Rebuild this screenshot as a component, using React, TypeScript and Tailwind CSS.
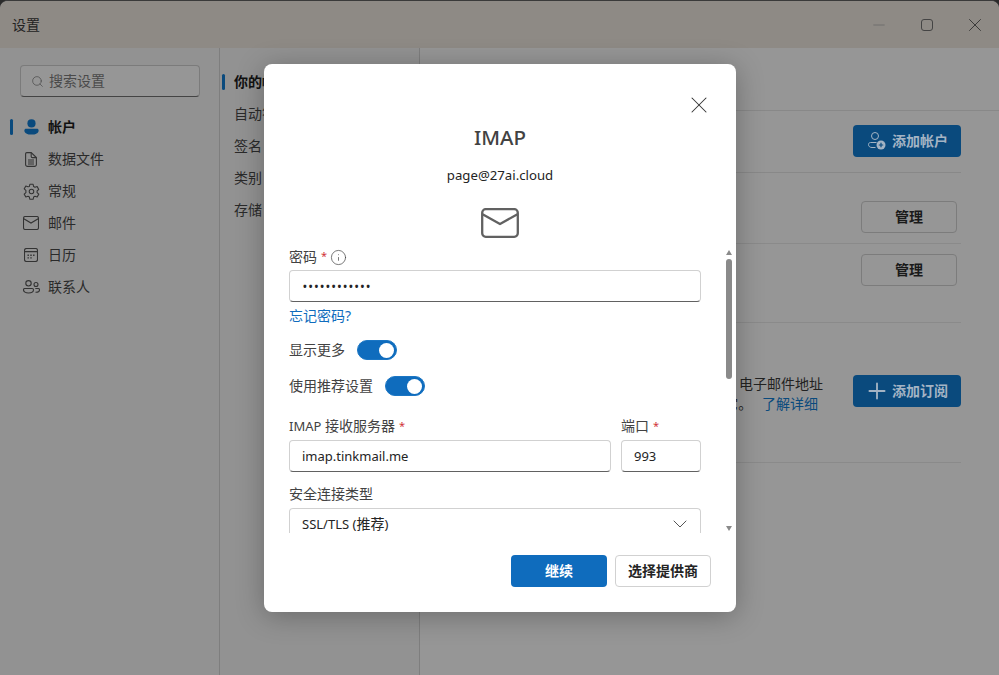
import React from "react";
import { Search, Minus, X, ChevronDown, Info, Plus } from "lucide-react";

const font = "font-['Noto_Sans','Noto_Sans_CJK_SC',sans-serif]";

function UserFilled() {
  return (
    <svg width="15" height="16" viewBox="0 0 16 18" fill="#0a4a7d">
      <circle cx="8" cy="5" r="4.600" />
      <path d="M1.800 11h12.400c1 0 1.800.8 1.800 1.800 0 2.900-3.200 4.700-8 4.700s-8-1.800-8-4.700C0 11.800.8 11 1.800 11z" />
    </svg>
  );
}
function FileIcon() {
  return (
    <svg width="12" height="15" viewBox="0 0 12 15" fill="none" stroke="#333" strokeWidth="1.100">
      <path d="M1.800.6h4.400L11.400 5.600v6.900a1.900 1.900 0 0 1-1.900 1.900h-7A1.900 1.900 0 0 1 .6 12.500V1.800A1.200 1.200 0 0 1 1.800.6z" />
      <path d="M6.200.8v3.600c0 .7.500 1.200 1.200 1.200h3.800M3 8h6M3 10h6M3 12h6" />
    </svg>
  );
}
function MailIcon() {
  return (
    <svg width="16" height="14" viewBox="0 0 16 14" fill="none" stroke="#333" strokeWidth="1.100">
      <rect x="0.500" y="0.500" width="15" height="13" rx="1.800" />
      <path d="M0.800 2.800 8 7l7.200-4.200" />
    </svg>
  );
}
function BigMail() {
  return (
    <svg width="38" height="30" viewBox="0 0 38 30" fill="none" stroke="#616161" strokeWidth="2.300" strokeLinecap="round" strokeLinejoin="round">
      <rect x="1.200" y="1.200" width="35.600" height="27.600" rx="3.500" />
      <path d="M2 6.500 19 16 36 6.500" />
    </svg>
  );
}
function CalendarIcon() {
  return (
    <svg width="14" height="14" viewBox="0 0 14 14" fill="none" stroke="#333" strokeWidth="1.100">
      <rect x="0.500" y="0.500" width="13" height="13" rx="2" />
      <path d="M.5 3.600h13" />
      <path fill="#333" stroke="none" d="M3.500 6.500h1.400v1.400H3.500zM6.300 6.500h1.400v1.400H6.300zM9.100 6.500h1.400v1.400H9.100zM3.500 9.200h1.400v1.400H3.500zM6.300 9.200h1.400v1.400H6.300z" />
    </svg>
  );
}
function GearIcon() {
  return (
    <svg width="17" height="17" viewBox="0 0 24 24" fill="none" stroke="#333" strokeWidth="1.500" strokeLinejoin="round">
      <path d="M9.700 1.800h4.600l.7 3.200 1.900 1.100 3.100-1 2.300 4-2.400 2.200v2.200l2.400 2.200-2.300 4-3.100-1-1.900 1.100-.7 3.200H9.700L9 19.800l-1.900-1.100-3.100 1-2.300-4L4.100 13.500v-3L1.700 8.300l2.300-4 3.100 1L9 4.900z" />
      <circle cx="12" cy="12" r="3.200" />
    </svg>
  );
}
function PeopleIcon() {
  return (
    <svg width="17" height="14" viewBox="0 0 17 14" fill="none" stroke="#333" strokeWidth="1.100">
      <circle cx="5.500" cy="3.300" r="2.700" />
      <path d="M1.800 8.500h7.400c.8 0 1.300.6 1.300 1.300 0 2-2.100 3.200-5 3.200s-5-1.200-5-3.200c0-.7.500-1.300 1.300-1.300z" />
      <circle cx="13" cy="4.500" r="2" />
      <path d="M12.300 8.500h2.900c.8 0 1.300.6 1.300 1.300 0 1.500-1.500 2.400-3.400 2.400h-.6" />
    </svg>
  );
}
function UserAddIcon() {
  return (
    <svg width="18" height="18" viewBox="0 0 18 18" fill="none" stroke="#a4b4c4" strokeWidth="1">
      <circle cx="7" cy="4" r="3.500" />
      <path d="M7.500 15.500H4c-1.900 0-3.500-1-3.500-3 0-1.200.9-2 2-2h6" />
      <circle cx="13" cy="13" r="4.500" fill="#a4b4c4" stroke="none" />
      <path d="M13 10.800v4.400M10.800 13h4.400" stroke="#0a4a7d" strokeWidth="1.200" />
    </svg>
  );
}

const navItems = [
  { label: "帐户", icon: <UserFilled />, active: true },
  { label: "数据文件", icon: <FileIcon /> },
  { label: "常规", icon: <GearIcon /> },
  { label: "邮件", icon: <MailIcon /> },
  { label: "日历", icon: <CalendarIcon /> },
  { label: "联系人", icon: <PeopleIcon /> },
];

const subItems = ["你的帐户", "自动答复", "签名", "类别", "存储"];

function Toggle() {
  return (
    <span className="flex h-5 w-10 items-center justify-end rounded-full border border-[#1b76c4] bg-[#0f6cbd] pr-[2px]">
      <span className="h-[15px] w-[15px] rounded-full bg-white" />
    </span>
  );
}

function Req() {
  return <span className="relative -top-[1px] ml-1 text-[11px] text-[#d13438]">*</span>;
}

function Field({ value }: { value: string }) {
  return (
    <div className="flex h-8 items-center rounded border border-[#d1d1d1] border-b-[#616161] bg-white px-3 text-[13px] text-[#242424]">
      {value}
    </div>
  );
}

export default function App() {
  return (
    <div className={`relative h-[675px] w-[999px] overflow-hidden bg-[#2b2b2b] ${font}`}>
      <div className="flex h-full flex-col overflow-hidden rounded-t-lg border-t border-[#3a3a3a] bg-[#969696]">
        <header className="flex h-[47px] shrink-0 items-center justify-between bg-[#8e8a85] pl-3 text-sm text-[#222]">
          <span>设置</span>
          <div className="flex items-center">
            <span className="flex w-12 justify-center"><Minus size={18} strokeWidth={1} color="#666" /></span>
            <span className="flex w-12 justify-center"><span className="h-3 w-3 rounded-[3px] border border-[#444]" /></span>
            <span className="flex w-12 justify-center"><X size={22} strokeWidth={1} color="#333" /></span>
          </div>
        </header>
        <div className="flex min-h-0 flex-1">
          <aside className="w-[220px] shrink-0 border-r border-[#7e7e7e] bg-[#929292] pr-[19px] pl-5 pt-[17px]">
            <div className="flex h-8 items-center gap-[5px] rounded border border-[#7b7b7b] border-b-[#444] bg-[#969696] px-[10px] text-sm text-[#4a4a4a]">
              <Search size={13} strokeWidth={1.2} color="#444" />
              <span>搜索设置</span>
            </div>
            <nav className="mt-[14px] -ml-2.5 flex flex-col">
              {navItems.map((item) => (
                <div key={item.label} className="flex h-8 items-center text-sm text-[#2a2a2a]">
                  <span className={`h-4 w-[3px] rounded-sm ${item.active ? "bg-[#0a4a7d]" : ""}`} />
                  <span className="ml-[8px] flex w-5 justify-center">{item.icon}</span>
                  <span className={`ml-[7px] ${item.active ? "font-bold text-[#111]" : ""}`}>{item.label}</span>
                </div>
              ))}
            </nav>
          </aside>
          <section className="w-[200px] shrink-0 border-r border-[#7e7e7e] bg-[#929292] pt-[18px] pl-0.5">
            {subItems.map((s, i) => (
              <div key={s} className="flex h-8 items-center text-sm text-[#2a2a2a]">
                <span className={`h-4 w-[3px] rounded-sm ${i === 0 ? "bg-[#0a4a7d]" : ""}`} />
                <span className={`ml-[9px] ${i === 0 ? "font-bold text-[#111]" : ""}`}>{s}</span>
              </div>
            ))}
          </section>
          <main className="flex-1 pt-[62px] text-sm text-[#222]">
            <div className="border-t border-[#888]">
              <div className="mr-[38px] flex h-[62px] justify-end border-b border-[#888] pt-[14px]">
                <button className="flex h-8 w-[108px] items-center gap-[6px] rounded bg-[#0a4a7d] pl-[15px] text-sm font-bold text-[#a4b4c4]">
                  <UserAddIcon />添加帐户
                </button>
              </div>
              <div className="mr-[38px] flex h-[71px] justify-end border-b border-[#8a8a8a] pt-[28px] pr-1">
                <button className="h-8 w-24 rounded border border-[#7c7c7c] text-sm font-bold text-[#1a1a1a]">管理</button>
              </div>
              <div className="mr-[38px] flex h-[79px] justify-end border-b border-[#8a8a8a] pt-[10px] pr-1">
                <button className="h-8 w-24 rounded border border-[#7c7c7c] text-sm font-bold text-[#1a1a1a]">管理</button>
              </div>
              <div className="mr-[38px] flex h-[140px] items-start justify-end border-b border-[#8a8a8a] pt-[52px]">
                <div className="mr-[30px] mt-[-1px] text-right leading-5 whitespace-nowrap">
                  <div>电子邮件地址</div>
                  <div className="pr-[5px]">它。 <span className="ml-1.5 text-[#0a4a7d]">了解详细</span></div>
                </div>
                <button className="flex h-8 w-[108px] shrink-0 items-center gap-[2px] rounded bg-[#0a4a7d] pl-[11px] text-sm font-bold text-[#a4b4c4]">
                  <Plus size={26} strokeWidth={1.7} color="#a4b4c4" />添加订阅
                </button>
              </div>
            </div>
          </main>
        </div>
      </div>

      <div className="absolute left-[264px] top-[64px] flex h-[548px] w-[472px] flex-col rounded-lg bg-white shadow-[0_4px_28px_rgba(0,0,0,0.28)]">
        <div className="flex justify-end pr-[23px] pt-[27px]">
          <X size={28} strokeWidth={0.9} color="#333" />
        </div>
        <h1 className="mt-1 text-center text-[20.5px] leading-7 font-medium text-[#424242]">IMAP</h1>
        <p className="mt-[14px] text-center text-[13.2px] leading-5 text-[#242424]">page@27ai.cloud</p>
        <div className="mt-[23px] flex justify-center">
          <BigMail />
        </div>
        <div className="mt-[9px] flex h-[286px] overflow-hidden">
          <div className="ml-[25px] w-[412px] shrink-0 text-sm text-[#424242]">
            <div className="flex h-5 items-center">
              <span>密码</span><Req />
              <Info size={17} strokeWidth={1} color="#424242" className="ml-[3px]" />
            </div>
            <div className="mt-[3px] flex h-8 items-center rounded border border-[#d1d1d1] border-b-[#616161] bg-white px-3 text-[#242424]">
              <span className="ml-px text-[10px] font-bold tracking-[2px]">••••••••••••</span>
            </div>
            <div className="mt-[4px] h-5 leading-5 text-[#0f6cbd]">忘记密码?</div>
            <div className="mt-[14px] flex items-center gap-3"><span>显示更多</span><Toggle /></div>
            <div className="mt-4 flex items-center gap-3"><span>使用推荐设置</span><Toggle /></div>
            <div className="mt-[20px] flex gap-2.5">
              <div className="flex-1">
                <div className="mb-1 h-5 leading-5"><span className="text-[13px]">IMAP</span> 接收服务器<Req /></div>
                <Field value="imap.tinkmail.me" />
              </div>
              <div className="w-20">
                <div className="mb-1 h-5 leading-5">端口<Req /></div>
                <Field value="993" />
              </div>
            </div>
            <div className="mt-[12px] h-5 leading-5">安全连接类型</div>
            <div className="mt-1 flex h-8 items-center justify-between rounded border border-[#d1d1d1] border-b-[#616161] bg-white px-3 text-[#242424]">
              <span><span className="text-[13px]">SSL/TLS (</span>推荐<span className="text-[13px]">)</span></span>
              <ChevronDown size={24} strokeWidth={0.9} color="#424242" className="-mr-1" />
            </div>
          </div>
          <div className="ml-[25px] flex h-[286px] w-[6px] flex-col items-center justify-between pt-[3px] pb-[2px]">
            <span className="h-0 w-0 border-x-[3px] border-b-[5px] border-x-transparent border-b-[#8a8a8a]" />
            <span className="mt-1 mb-auto h-[120px] w-[6px] rounded bg-[#8a8a8a]" />
            <span className="h-0 w-0 border-x-[3px] border-t-[5px] border-x-transparent border-t-[#8a8a8a]" />
          </div>
        </div>
        <div className="mt-[22px] flex justify-end gap-2 pr-[25px]">
          <button className="h-8 w-24 rounded bg-[#0f6cbd] text-sm font-bold text-white">继续</button>
          <button className="h-8 w-24 rounded border border-[#d1d1d1] bg-white text-sm font-bold text-[#242424]">选择提供商</button>
        </div>
      </div>
    </div>
  );
}
